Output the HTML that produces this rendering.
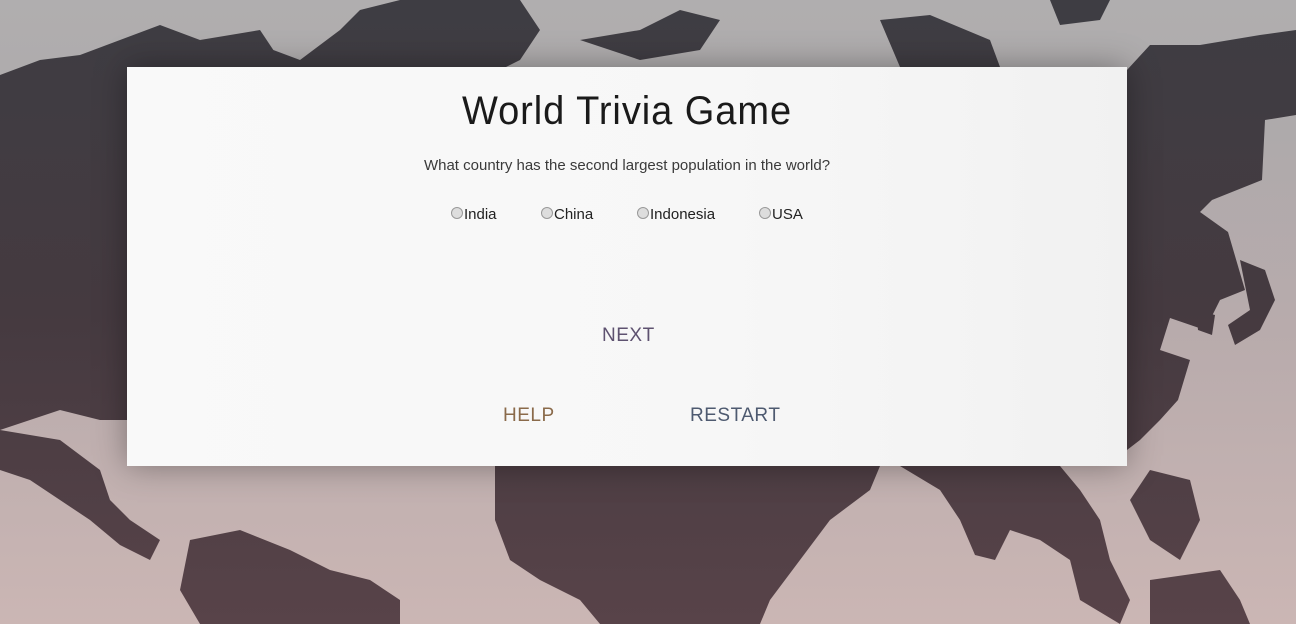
<!DOCTYPE html>
<html><head><meta charset="utf-8"><style>
html,body{margin:0;padding:0;width:1296px;height:624px;overflow:hidden}
body{background:linear-gradient(#b0aeaf 0px,#aeaaab 130px,#b8abac 330px,#cbb6b4 624px);font-family:"Liberation Sans",sans-serif;position:relative}
svg.map{position:absolute;left:0;top:0}
.panel{position:absolute;left:127px;top:67px;width:1000px;height:399px;background:linear-gradient(90deg,#f9f9f9,#f7f7f7 60%,#f1f1f1);box-shadow:0 0 30px rgba(0,0,0,0.35);text-align:center}
h1{margin:0;position:absolute;top:22px;left:0;width:1000px;font-weight:normal;font-size:40px;letter-spacing:1px;color:#1a1a1a;transform:scaleX(0.95)}
.q{position:absolute;top:90px;left:0;width:1000px;font-size:15px;color:#3a3a3a}
.opt{position:absolute;top:139px;font-size:15px;color:#222}
.opt i{display:inline-block;width:10px;height:10px;border-radius:50%;border:1px solid #999;background:#ddd;vertical-align:0;margin-right:1px}
.b{position:absolute;font-size:19px;letter-spacing:0.5px}
</style></head><body>
<svg class="map" width="1296" height="624" viewBox="0 0 1296 624">
<defs><linearGradient id="g" gradientUnits="userSpaceOnUse" x1="0" y1="0" x2="0" y2="624"><stop offset="0" stop-color="#3e3d43"/><stop offset="0.5" stop-color="#453a40"/><stop offset="1" stop-color="#584349"/></linearGradient></defs>
<g fill="url(#g)">
<polygon points="0,75 40,60 80,55 120,40 160,25 200,40 230,50 260,45 300,60 340,30 360,10 400,0 520,0 540,30 520,60 500,70 127,70 127,420 100,420 60,410 30,420 0,430"/>
<polygon points="0,430 60,440 100,470 110,500 130,520 160,540 150,560 120,545 90,520 60,500 30,480 0,470"/>
<polygon points="190,540 240,530 290,550 330,570 370,580 400,600 400,624 200,624 180,590"/>
<polygon points="495,466 880,466 870,490 830,520 800,560 770,600 760,624 600,624 580,600 540,580 510,560 495,520"/>
<polygon points="900,466 1060,466 1080,490 1100,520 1110,560 1130,600 1120,624 1080,600 1070,560 1040,540 1010,530 995,560 975,555 960,520 940,490"/>
<polygon points="1127,70 1150,45 1200,45 1230,40 1260,35 1296,30 1296,115 1265,120 1262,180 1212,200 1200,212 1228,232 1245,290 1220,300 1205,330 1170,318 1160,350 1190,360 1178,400 1160,420 1140,440 1127,450"/>
<polygon points="1240,260 1265,270 1275,300 1260,330 1235,345 1228,325 1250,310"/>
<polygon points="1196,310 1215,315 1212,335 1198,330"/>
<polygon points="1150,470 1190,480 1200,520 1180,560 1150,540 1130,500"/>
<polygon points="1150,580 1220,570 1240,600 1250,624 1150,624"/>
<polygon points="580,40 640,30 680,10 720,20 700,50 640,60"/>
<polygon points="880,20 930,15 990,40 1000,67 900,67"/>
<polygon points="1050,0 1110,0 1100,20 1060,25"/>
<polygon points="200,40 260,30 280,60 220,67"/>
</g>
</svg>
<div class="panel">
<h1>World Trivia Game</h1>
<div class="q">What country has the second largest population in the world?</div>
<div class="opt" style="left:324px"><i></i>India</div>
<div class="opt" style="left:414px"><i></i>China</div>
<div class="opt" style="left:510px"><i></i>Indonesia</div>
<div class="opt" style="left:632px"><i></i>USA</div>
<div class="b" style="left:475px;top:258px;color:#5e5270">NEXT</div>
<div class="b" style="left:376px;top:338px;color:#8a6a4a">HELP</div>
<div class="b" style="left:563px;top:338px;color:#4e5a70">RESTART</div>
</div>
</body></html>
